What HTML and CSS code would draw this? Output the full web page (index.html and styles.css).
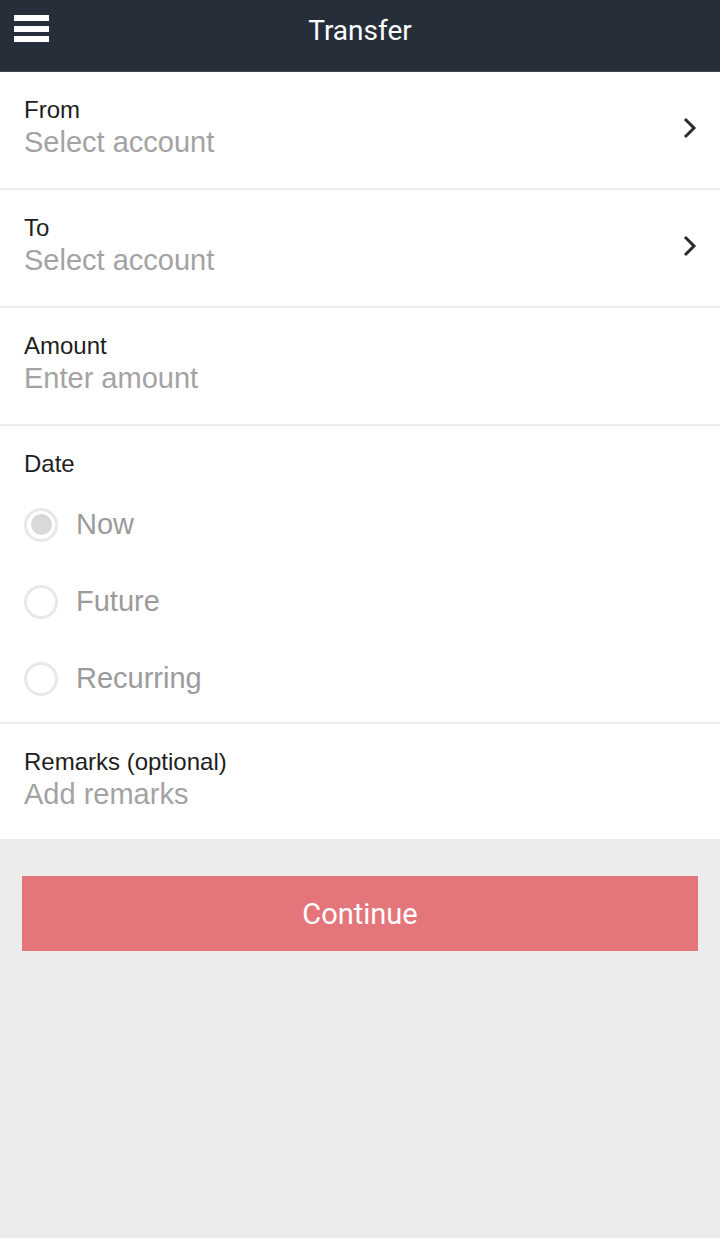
FILE: index.html
```html
<!DOCTYPE html>
<html>
<head>
<meta charset="utf-8">
<link rel="stylesheet" href="styles.css">
</head>
<body>
<header class="topbar">
  <div class="menu"><span></span><span></span><span></span></div>
  <h1 class="title">Transfer</h1>
</header>
<main class="form">
  <div class="row link">
    <div class="field">
      <div class="label">From</div>
      <div class="value">Select account</div>
    </div>
    <svg class="chev" width="16" height="24" viewBox="0 0 16 24"><polyline points="3,3 12,12 3,21" fill="none" stroke="#2b2b2b" stroke-width="3"/></svg>
  </div>
  <div class="row link">
    <div class="field">
      <div class="label">To</div>
      <div class="value">Select account</div>
    </div>
    <svg class="chev" width="16" height="24" viewBox="0 0 16 24"><polyline points="3,3 12,12 3,21" fill="none" stroke="#2b2b2b" stroke-width="3"/></svg>
  </div>
  <div class="row">
    <div class="field">
      <div class="label">Amount</div>
      <div class="value">Enter amount</div>
    </div>
  </div>
  <div class="row date">
    <div class="field">
      <div class="label">Date</div>
      <div class="radios">
        <div class="radio"><span class="circle checked"></span><span class="rlabel">Now</span></div>
        <div class="radio"><span class="circle"></span><span class="rlabel">Future</span></div>
        <div class="radio"><span class="circle"></span><span class="rlabel">Recurring</span></div>
      </div>
    </div>
  </div>
  <div class="row last">
    <div class="field">
      <div class="label">Remarks (optional)</div>
      <div class="value">Add remarks</div>
    </div>
  </div>
</main>
<div class="actions">
  <button class="continue">Continue</button>
</div>
</body>
</html>
```
FILE: styles.css
```css
html, body {
  margin: 0;
  padding: 0;
  background: #ececec;
  font-family: "Liberation Sans", Arial, sans-serif;
}
.topbar {
  height: 71px;
  background: #262f39;
  border-bottom: 1px solid #3c444c;
  display: flex;
  align-items: center;
  justify-content: center;
  position: relative;
}
.menu {
  position: absolute;
  left: 14px;
  top: 15px;
  width: 35px;
  display: flex;
  flex-direction: column;
  gap: 4.5px;
}
.menu span {
  display: block;
  height: 6px;
  background: #ffffff;
}
.title {
  margin: 0;
  font-family: Roboto, "Liberation Sans", sans-serif;
  font-weight: 400;
  font-size: 28px;
  color: #ffffff;
  position: relative;
  top: -5px;
}
.form {
  background: #ffffff;
}
.row {
  display: flex;
  align-items: center;
  height: 116px;
  border-bottom: 2px solid #ebebeb;
  padding: 0 22px 0 24px;
  box-sizing: content-box;
}
.row.last {
  border-bottom: none;
  height: 115px;
}
.row .field {
  flex: 1;
  align-self: flex-start;
  padding-top: 24px;
}
.label {
  font-size: 24px;
  line-height: 28px;
  color: #1e1e1e;
}
.value {
  margin-top: 2px;
  font-size: 29px;
  line-height: 32px;
  color: #a3a3a3;
}
.chev {
  display: block;
  margin-top: -4px;
}
.row.date {
  height: 296px;
}
.radios {
  margin-top: 8px;
  display: flex;
  flex-direction: column;
}
.radio {
  height: 77px;
  display: flex;
  align-items: center;
  gap: 18px;
}
.circle {
  width: 28px;
  height: 28px;
  border: 3px solid #e8e8e8;
  border-radius: 50%;
  display: flex;
  align-items: center;
  justify-content: center;
  box-sizing: content-box;
}
.circle.checked::after {
  content: "";
  width: 21px;
  height: 21px;
  border-radius: 50%;
  background: #d9d9d9;
}
.rlabel {
  font-size: 29px;
  color: #9b9b9b;
}
.actions {
  padding: 37px 22px 0 22px;
}
.continue {
  display: block;
  width: 100%;
  height: 75px;
  border: none;
  margin: 0;
  background: #e4767b;
  color: #ffffff;
  font-family: Roboto, "Liberation Sans", sans-serif;
  font-size: 29px;
  font-weight: 400;
  padding: 0;
}
```
